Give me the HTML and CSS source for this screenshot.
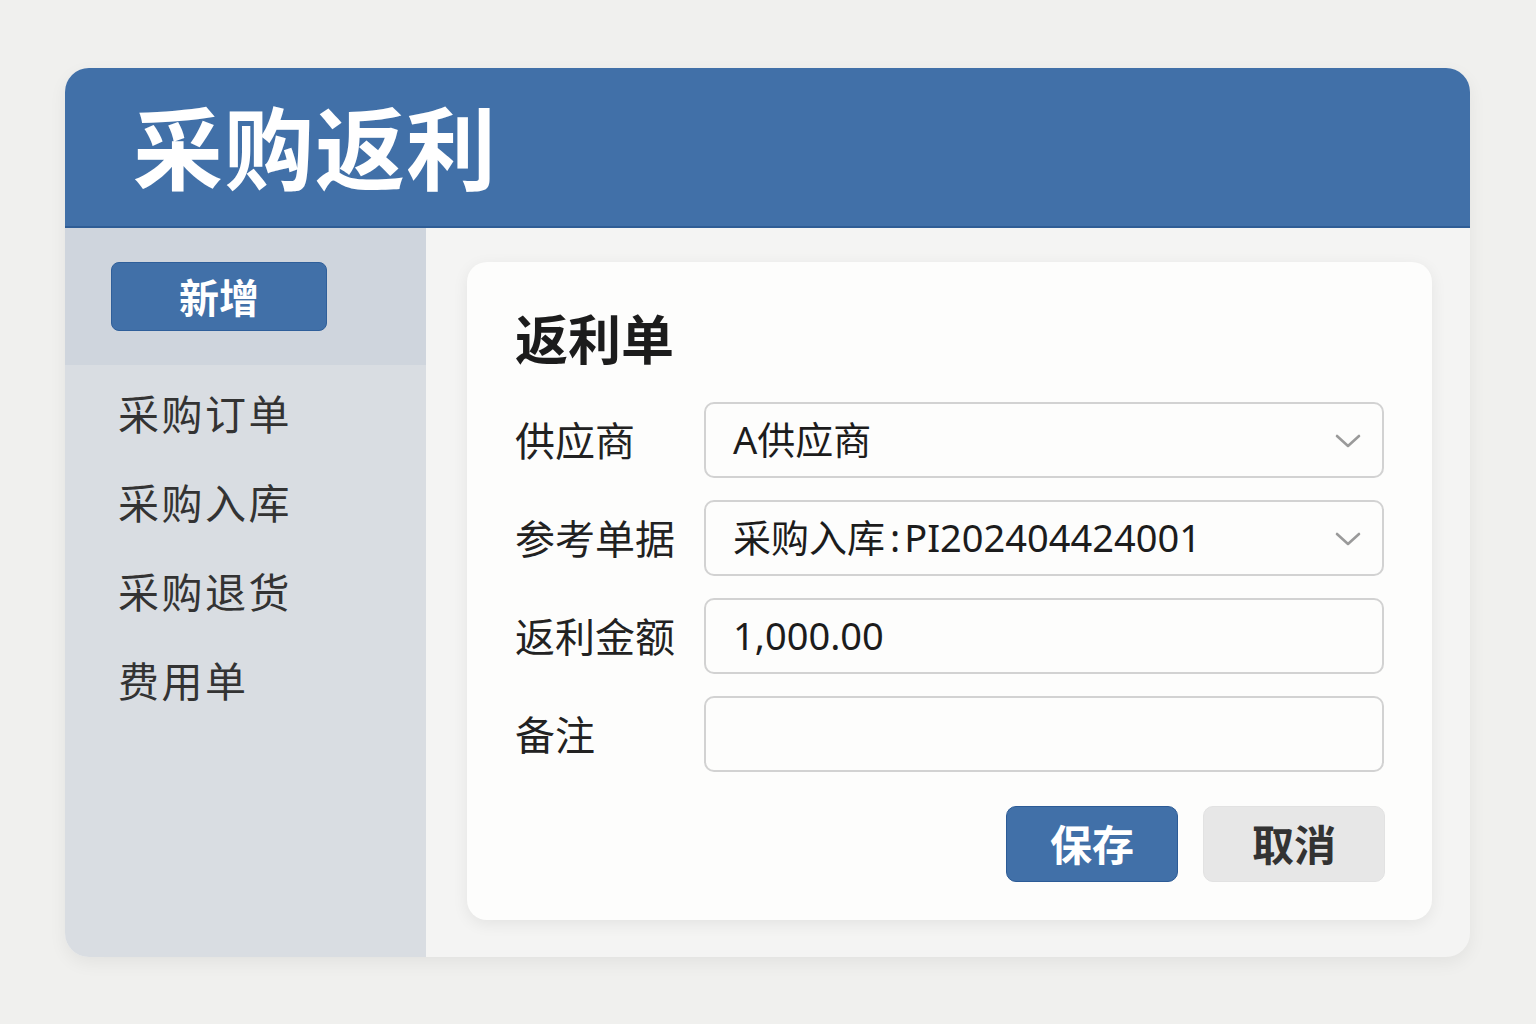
FILE: index.html
```html
<!DOCTYPE html>
<html lang="zh-CN">
<head>
<meta charset="utf-8">
<title>采购返利</title>
<link rel="stylesheet" href="styles.css">
</head>
<body>
<div class="panel">
  <header class="header">
    <h1 class="title">采购返利</h1>
  </header>
  <div class="body">
    <aside class="sidebar">
      <div class="sidebar-top">
        <button class="btn-new">新增</button>
      </div>
      <ul class="nav">
        <li>采购订单</li>
        <li>采购入库</li>
        <li>采购退货</li>
        <li>费用单</li>
      </ul>
    </aside>
    <main class="main">
      <section class="card">
        <h2 class="card-title">返利单</h2>
        <div class="form">
          <div class="row">
            <label class="label">供应商</label>
            <div class="field select">
              <span class="value">A供应商</span>
              <svg class="chev" width="26" height="16" viewBox="0 0 26 16"><path d="M2 3 L13 13 L24 3" fill="none" stroke="#9a9a9a" stroke-width="2.6" stroke-linecap="round" stroke-linejoin="round"/></svg>
            </div>
          </div>
          <div class="row">
            <label class="label">参考单据</label>
            <div class="field select">
              <span class="value">采购入库<span class="colon">:</span>PI202404424001</span>
              <svg class="chev" width="26" height="16" viewBox="0 0 26 16"><path d="M2 3 L13 13 L24 3" fill="none" stroke="#9a9a9a" stroke-width="2.6" stroke-linecap="round" stroke-linejoin="round"/></svg>
            </div>
          </div>
          <div class="row">
            <label class="label">返利金额</label>
            <div class="field"><span class="value">1,000.00</span></div>
          </div>
          <div class="row">
            <label class="label">备注</label>
            <div class="field"></div>
          </div>
        </div>
        <div class="actions">
          <button class="btn btn-save">保存</button>
          <button class="btn btn-cancel">取消</button>
        </div>
      </section>
    </main>
  </div>
</div>
</body>
</html>
```

FILE: styles.css
```css
* { box-sizing: border-box; }
html, body { margin: 0; padding: 0; }
body {
  width: 1536px;
  height: 1024px;
  background: #f0f0ee;
  font-family: "Noto Sans", "Noto Sans CJK SC", sans-serif;
  padding: 68px 66px 0 65px;
}
.panel {
  width: 1405px;
  height: 889px;
  border-radius: 24px;
  overflow: hidden;
  background: #f4f4f3;
  box-shadow: 0 6px 18px rgba(0,0,0,0.06);
  display: flex;
  flex-direction: column;
}
.header {
  height: 160px;
  background: #4170a8;
  border-bottom: 2px solid #2f5d95;
  display: flex;
  align-items: center;
  padding-left: 68px;
}
.title {
  margin: 0;
  color: #ffffff;
  font-family: "Noto Sans CJK SC", sans-serif;
  font-weight: 700;
  font-size: 90px;
  line-height: 1;
  letter-spacing: 1px;
  padding-bottom: 6px;
}
.body {
  flex: 1;
  display: flex;
}
.sidebar {
  width: 361px;
  background: #d9dde2;
  display: flex;
  flex-direction: column;
}
.sidebar-top {
  height: 137px;
  background: #cfd5dd;
  padding: 34px 0 0 46px;
}
.btn-new {
  width: 216px;
  height: 69px;
  background: #4170a8;
  border: 1px solid #2f5f9a;
  border-radius: 8px;
  color: #fff;
  font-family: "Noto Sans CJK SC", sans-serif;
  font-weight: 700;
  font-size: 40px;
  line-height: 1;
  padding: 0 0 2px;
}
.nav {
  list-style: none;
  margin: 0;
  padding: 3px 0 0 53px;
}
.nav li {
  height: 89px;
  line-height: 89px;
  font-family: "Noto Sans CJK SC", sans-serif;
  font-size: 41px;
  letter-spacing: 2.5px;
  color: #333;
}
.main {
  flex: 1;
  padding: 34px 38px 37px 41px;
}
.card {
  height: 658px;
  background: #fdfdfc;
  border-radius: 20px;
  box-shadow: 0 4px 16px rgba(0,0,0,0.07);
  padding: 45px 48px 38px 48px;
  display: flex;
  flex-direction: column;
}
.card-title {
  margin: 0;
  height: 60px;
  line-height: 60px;
  font-family: "Noto Sans CJK SC", sans-serif;
  font-size: 53px;
  font-weight: 700;
  color: #1c1c1c;
}
.form {
  margin-top: 35px;
  display: flex;
  flex-direction: column;
  gap: 22px;
}
.row {
  display: flex;
  align-items: center;
  height: 76px;
}
.label {
  width: 189px;
  flex: none;
  font-family: "Noto Sans CJK SC", sans-serif;
  font-size: 40px;
  color: #222;
  padding-bottom: 3px;
}
.field {
  flex: 1;
  height: 76px;
  border: 2px solid #d2d2d2;
  border-radius: 10px;
  background: #fdfdfc;
  display: flex;
  align-items: center;
  padding: 0 21px 0 27px;
}
.value {
  flex: 1;
  font-size: 38px;
  color: #1c1c1c;
  line-height: 1;
  padding-bottom: 2px;
}
.colon {
  padding: 0 4px 0 5px;
}
.chev { flex: none; margin-top: 2px; }
.actions {
  margin-top: 34px;
  display: flex;
  justify-content: flex-end;
  gap: 25px;
  margin-right: -1px;
}
.btn {
  height: 76px;
  border-radius: 10px;
  font-family: "Noto Sans CJK SC", sans-serif;
  font-weight: 700;
  font-size: 42px;
  line-height: 1;
  padding: 0 0 2px;
}
.btn-save {
  width: 172px;
  background: #4170a8;
  border: 1px solid #2c5b96;
  color: #fff;
}
.btn-cancel {
  width: 182px;
  background: #e7e7e7;
  border: 1px solid #e2e2e2;
  color: #333;
}
```
